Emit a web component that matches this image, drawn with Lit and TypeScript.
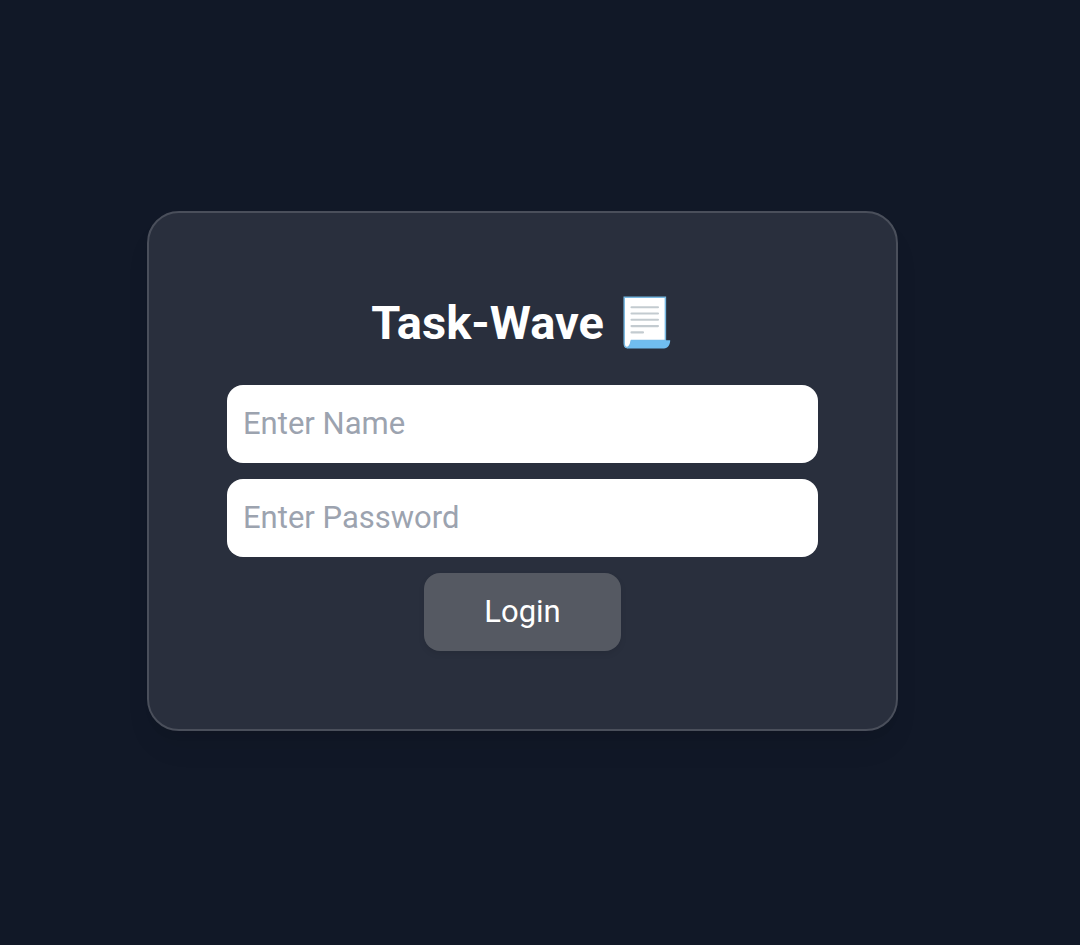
import { LitElement, html, css } from "lit";
import { customElement } from "lit/decorators.js";

@customElement("app-root")
export class AppRoot extends LitElement {
  static styles = css`
    :host {
      display: block;
      font-family: Roboto, "Liberation Sans", sans-serif;
    }
    *,
    *::before,
    *::after {
      box-sizing: border-box;
    }
    .page {
      min-height: 100vh;
      display: flex;
      align-items: center;
      justify-content: center;
      padding: 0 35px 3px 0;
      background: #111827;
    }
    .card {
      width: 100%;
      max-width: 751px;
      padding: 78px;
      border: 2px solid #4a4f5b;
      border-radius: 32px;
      background: #292f3d;
      box-shadow: 0 20px 30px -6px rgba(0, 0, 0, 0.07),
        0 8px 12px -8px rgba(0, 0, 0, 0.1);
      display: flex;
      flex-direction: column;
      align-items: center;
      gap: 16px;
    }
    .title {
      margin: 0 0 15px;
      display: flex;
      align-items: center;
      gap: 12px;
      font-size: 47px;
      line-height: 63px;
      font-weight: 700;
      color: #fff;
    }
    .scroll {
      display: block;
      width: 58px;
      height: 63px;
    }
    .field {
      display: block;
      width: 100%;
    }
    .input {
      display: block;
      width: 100%;
      height: 78px;
      padding: 0 16px 2px;
      border: 0;
      border-radius: 16px;
      background: #fff;
      color: #111827;
      font: inherit;
      font-size: 31px;
      outline: none;
    }
    .input::placeholder {
      color: #9ca3af;
      opacity: 1;
    }
    .login {
      width: 33.333%;
      height: 78px;
      padding: 0 0 2px;
      border: 0;
      border-radius: 16px;
      background: #555962;
      color: #fff;
      font: inherit;
      font-size: 31px;
      box-shadow: 0 3px 6px rgba(0, 0, 0, 0.08);
      cursor: pointer;
    }
  `;

  render() {
    return html`
      <main class="page">
        <form class="card" @submit=${(e: Event) => e.preventDefault()}>
          <h1 class="title">
            <span>Task-Wave</span>
            <svg class="scroll" viewBox="0 0 58 63" aria-hidden="true">
              <path
                d="M8.2 6.2H49.4V49.5H15.5C14.5 54 13.5 56.6 11 56.6C8.5 56.6 8.2 54.5 8.2 52Z"
                fill="#fff"
                stroke="#78b9e2"
                stroke-width="1.5"
              />
              <path
                d="M14.8 49.2H54.2C54.2 53.5 52 57.4 48 57.4H10.5C13.4 56.8 14.2 53.5 14.8 49.2Z"
                fill="#70bdef"
              />
              <path
                d="M15.5 16.3H42M15.5 22.5H42M15.5 28.8H42M15.5 35.1H42M15.5 41.4H27"
                fill="none"
                stroke="#c3cbd0"
                stroke-width="2.1"
                stroke-linecap="round"
              />
            </svg>
          </h1>
          <label class="field">
            <input class="input" type="text" name="name" placeholder="Enter Name" aria-label="Enter Name" />
          </label>
          <label class="field">
            <input class="input" type="password" name="password" placeholder="Enter Password" aria-label="Enter Password" />
          </label>
          <button class="login" type="submit">Login</button>
        </form>
      </main>
    `;
  }
}
